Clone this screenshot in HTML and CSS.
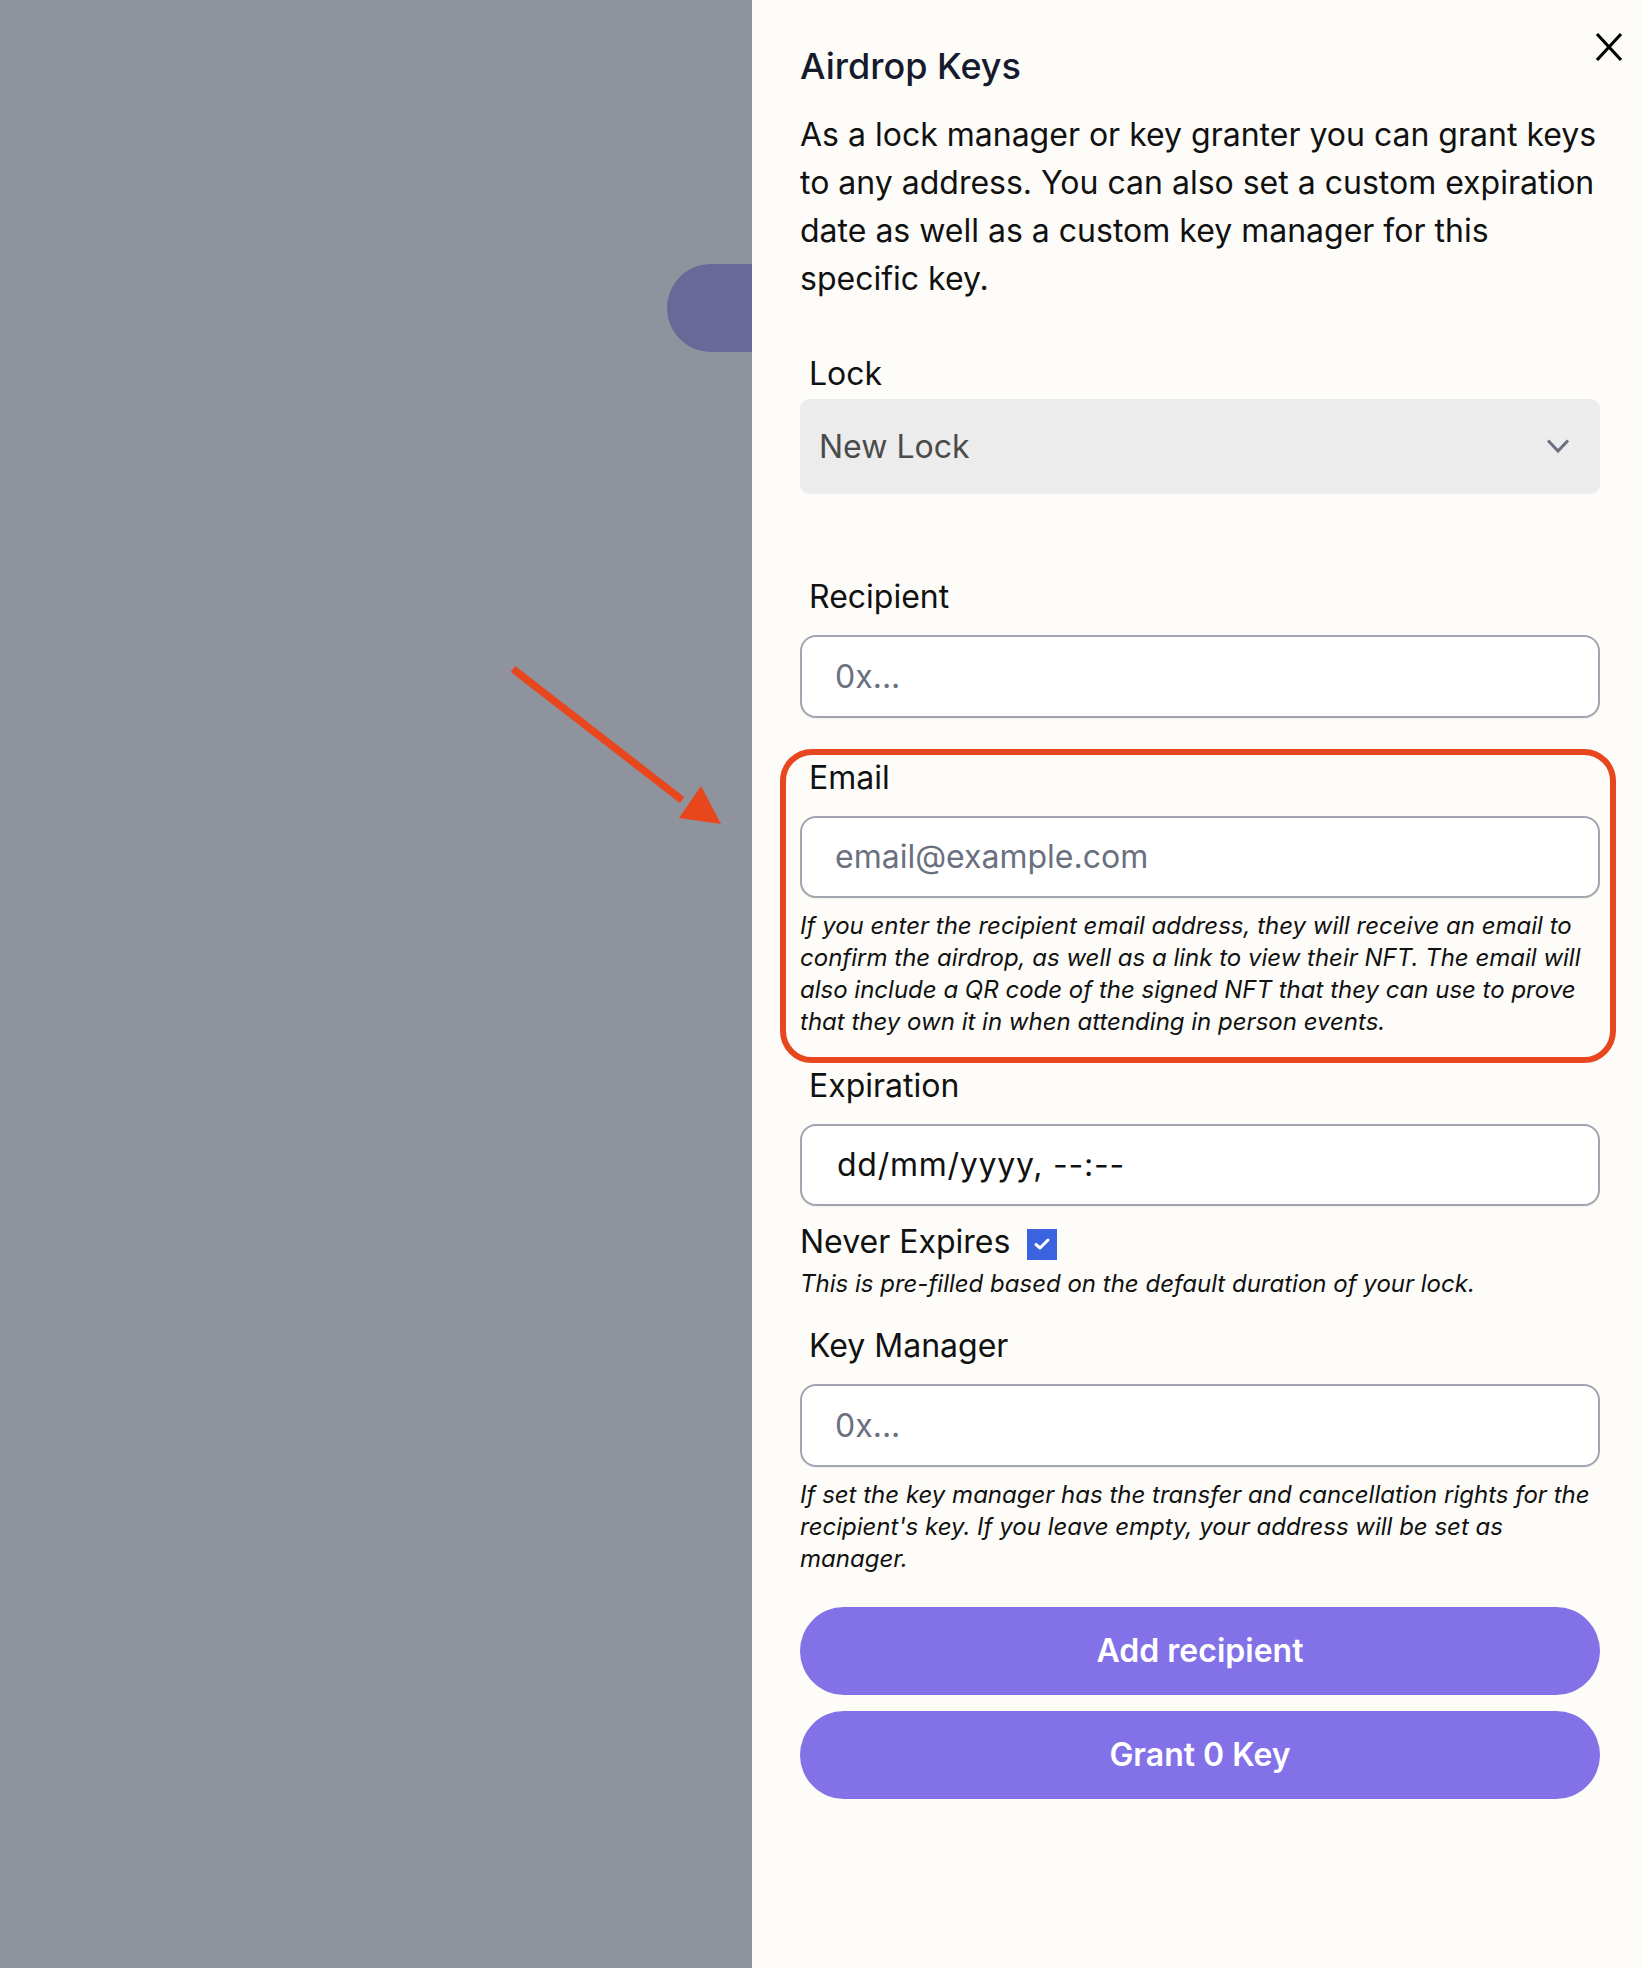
FILE: index.html
```html
<!DOCTYPE html>
<html lang="en">
<head>
<meta charset="utf-8">
<title>Airdrop Keys</title>
<link rel="stylesheet" href="styles.css">
</head>
<body>
<div class="page">
  <div class="backdrop">
    <div class="behind-pill"></div>
    <svg class="arrow" width="240" height="180" viewBox="0 0 240 180" aria-hidden="true">
      <line x1="33" y1="29" x2="202" y2="160" stroke="#e8471e" stroke-width="7.5"/>
      <polygon points="241,184 199,178 221,146" fill="#e8471e"/>
    </svg>
  </div>
  <aside class="panel">
    <button class="close" aria-label="Close">
      <svg width="28" height="30" viewBox="0 0 28 30"><path d="M2 2 L26 28 M26 2 L2 28" stroke="#000" stroke-width="3.2" fill="none"/></svg>
    </button>
    <h2 class="title">Airdrop Keys</h2>
    <p class="intro">As a lock manager or key granter you can grant keys to any address. You can also set a custom expiration date as well as a custom key manager for this specific key.</p>

    <div class="field">
      <div class="label label-lock">Lock</div>
      <div class="select">
        <span>New Lock</span>
        <svg width="24" height="14" viewBox="0 0 24 14"><path d="M2 1.5 L12 12 L22 1.5" stroke="#6b7080" stroke-width="3" fill="none"/></svg>
      </div>
    </div>

    <div class="field">
      <div class="label label-recipient">Recipient</div>
      <div class="input"><span class="placeholder">0x...</span></div>
    </div>

    <div class="field email-group">
      <div class="label label-email">Email</div>
      <div class="input input-email"><span class="placeholder">email@example.com</span></div>
      <p class="help help-email">If you enter the recipient email address, they will receive an email to confirm the airdrop, as well as a link to view their NFT. The email will also include a QR code of the signed NFT that they can use to prove that they own it in when attending in person events.</p>
    </div>

    <div class="field">
      <div class="label label-exp">Expiration</div>
      <div class="input input-date"><span class="value">dd/mm/yyyy, --:--</span></div>
      <div class="never">
        <span>Never Expires</span>
        <span class="checkbox">
          <svg width="18" height="14" viewBox="0 0 18 14"><path d="M3 7.5 L7 11 L15 3" stroke="#fff" stroke-width="3" fill="none" stroke-linecap="round" stroke-linejoin="round"/></svg>
        </span>
      </div>
      <p class="help help-never">This is pre-filled based on the default duration of your lock.</p>
    </div>

    <div class="field">
      <div class="label label-km">Key Manager</div>
      <div class="input"><span class="placeholder">0x...</span></div>
      <p class="help help-km">If set the key manager has the transfer and cancellation rights for the recipient's key. If you leave empty, your address will be set as manager.</p>
    </div>

    <button class="btn btn-add">Add recipient</button>
    <button class="btn btn-grant">Grant 0 Key</button>
  </aside>
</div>
</body>
</html>
```

FILE: styles.css
```css
* { box-sizing: border-box; }
html, body { margin: 0; padding: 0; }
body {
  font-family: Inter, "Noto Sans", "Liberation Sans", sans-serif;
  color: #111;
  background: #8f939d;
}
.page {
  display: flex;
  width: 1642px;
  height: 1968px;
  overflow: hidden;
}
.backdrop {
  position: relative;
  width: 752px;
  flex: 0 0 752px;
  background: #8f939d;
}
.behind-pill {
  position: absolute;
  left: 667px;
  top: 264px;
  width: 140px;
  height: 88px;
  border-radius: 44px;
  background: #6a6799;
}
.arrow {
  position: absolute;
  left: 480px;
  top: 640px;
  overflow: visible;
}
.panel {
  position: relative;
  flex: 1;
  background: #fdfcf8;
  padding: 0 42px 0 48px;
  display: flex;
  flex-direction: column;
}
.close {
  position: absolute;
  top: 32px;
  right: 19px;
  width: 28px;
  height: 30px;
  padding: 0;
  border: 0;
  background: none;
  display: flex;
}
.title {
  margin: 44px 0 0;
  font-size: 36px;
  line-height: 44px;
  font-weight: 500;
  color: #151a2d;
}
.intro {
  margin: 22.9px 0 0;
  font-size: 32px;
  line-height: 48px;
  color: #111;
}
.field { display: flex; flex-direction: column; }
.label {
  padding-left: 9px;
  font-size: 32px;
  line-height: 36px;
  color: #111;
}
.label-lock { margin-top: 53.5px; }
.label-recipient { margin-top: 85.4px; }
.label-email { margin-top: 42.4px; }
.label-exp { margin-top: 30px; }
.label-km { margin-top: 28.6px; }
.select {
  margin-top: 6.6px;
  height: 95px;
  border-radius: 10px;
  background: #ececec;
  display: flex;
  align-items: center;
  justify-content: space-between;
  padding: 0 30px 0 19px;
  font-size: 32px;
  color: #4b4b4b;
}
.input {
  margin-top: 19.6px;
  height: 83px;
  border: 2px solid #a1a5b1;
  border-radius: 16px;
  background: #fff;
  display: flex;
  align-items: center;
  padding-left: 33px;
  font-size: 32px;
  box-shadow: 0 1px 2px rgba(0,0,0,0.06);
}
.input-email, .input-date { height: 82px; }
.placeholder { color: #6b7080; }
.input-date { padding-left: 35px; }
.value { color: #111; letter-spacing: 0.75px; }
.help {
  margin: 0;
  font-size: 24px;
  line-height: 32px;
  font-style: italic;
  color: #111;
}
.help-email { margin-top: 12.4px; }
.help-never { margin-top: 7.4px; }
.help-km { margin-top: 12.3px; }
.email-group { position: relative; }
.email-group::after {
  content: "";
  position: absolute;
  left: -20px;
  right: -16px;
  top: 31px;
  bottom: -24.6px;
  border: 6px solid #e8461e;
  border-radius: 32px;
  pointer-events: none;
}
.never {
  margin-top: 18.4px;
  display: flex;
  align-items: center;
  gap: 17px;
  font-size: 32px;
  line-height: 36px;
}
.checkbox {
  width: 30px;
  height: 31px;
  margin-top: 4px;
  background: #3b63e0;
  display: flex;
  align-items: center;
  justify-content: center;
}
.btn {
  height: 88px;
  border: 0;
  border-radius: 44px;
  background: #8371e8;
  color: #fff;
  font-family: Inter, "Noto Sans", "Liberation Sans", sans-serif;
  font-size: 32px;
  font-weight: 600;
  width: 800px;
}
.btn-add { margin-top: 31.7px; }
.btn-grant { margin-top: 16px; }
```
